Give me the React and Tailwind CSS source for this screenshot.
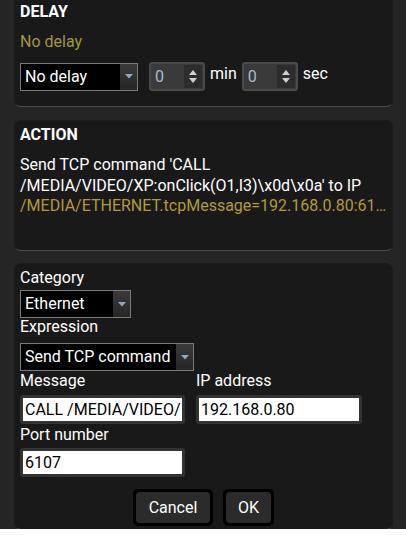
import React from "react";

const Arrow = () => (
  <svg width="8" height="5" viewBox="0 0 8 5">
    <path d="M0 0 L8 0 L4 4.5 Z" fill="#8fa6c6" />
  </svg>
);

const Select = ({ value, width }) => (
  <div
    className={`flex h-[28px] border border-[#7a7a7a] bg-black ${width}`}
  >
    <div className="flex-1 pl-[4px] text-[16px] leading-[26px] text-white truncate">{value}</div>
    <div className="flex w-[17px] items-center justify-center bg-gradient-to-b from-[#3a3a3a] to-[#262626]">
      <Arrow />
    </div>
  </div>
);

const Spinner = () => (
  <div className="flex h-[29px] w-[56px] rounded-[3px] border-2 border-[#4a4a4a] bg-[#3a3a3a]">
    <div className="flex-1 pl-[4px] text-[16px] leading-[25px] text-[#a7bccf]">0</div>
    <div className="flex w-[18px] flex-col items-center justify-center gap-[3px] bg-[#2c2c2c] my-[1px] mr-[1px]">
      <svg width="8" height="5" viewBox="0 0 8 5">
        <path d="M0 5 L8 5 L4 0 Z" fill="#cfcfcf" />
      </svg>
      <svg width="8" height="5" viewBox="0 0 8 5">
        <path d="M0 0 L8 0 L4 5 Z" fill="#cfcfcf" />
      </svg>
    </div>
  </div>
);

const TextInput = ({ value, width }) => (
  <div className={`h-[29px] rounded-[3px] bg-[#333] p-[3px] ${width}`}>
    <div className="h-full bg-white pl-[2px] text-[16px] leading-[23px] text-black overflow-hidden whitespace-nowrap">
      {value}
    </div>
  </div>
);

const Label = ({ children, className = "" }) => (
  <div className={`h-[20px] text-[16px] leading-[20px] text-white ${className}`}>{children}</div>
);

const panel =
  "rounded-[7px] border border-[#1c1c1c] border-b-[#4d4d4d] bg-[#191919] px-[5px]";

export default function App() {
  return (
    <div
      className="h-[537px] w-[406px] bg-[#252525] pl-[14px] pr-[13px]"
      style={{ fontFamily: "Roboto, 'Liberation Sans', sans-serif" }}
    >
      <div className={`${panel} -mt-[8px] h-[115px] pt-[10px]`}>
        <div className="h-[18px] text-[16px] font-bold leading-[18px] text-white">DELAY</div>
        <div className="mt-[11px] h-[20px] text-[16px] leading-[20px] text-[#a19738]">No delay</div>
        <div className="mt-[10px] flex items-center">
          <Select value="No delay" width="w-[118px]" />
          <div className="ml-[11px]">
            <Spinner />
          </div>
          <div className="ml-[5px] mr-[5px] -mt-[6px] text-[16px] leading-[20px] text-white">min</div>
          <Spinner />
          <div className="ml-[5px] -mt-[6px] text-[16px] leading-[20px] text-white">sec</div>
        </div>
      </div>

      <div className={`${panel} mt-[13px] h-[131px] pt-[3px]`}>
        <div className="h-[18px] text-[16px] font-bold leading-[18px] text-white mt-[2px]">ACTION</div>
        <div className="mt-[11px] text-[16px] leading-[20.5px] text-white">
          <div>Send TCP command 'CALL</div>
          <div className="whitespace-nowrap">/MEDIA/VIDEO/XP:onClick(O1,I3)\x0d\x0a' to IP</div>
          <div className="truncate text-[#b09c31]">
            /MEDIA/ETHERNET.tcpMessage=192.168.0.80:6107
          </div>
        </div>
      </div>

      <div className={`${panel} mt-[12px] h-[267px] pt-[4px]`}>
        <Label>Category</Label>
        <div className="mt-[2px]">
          <Select value="Ethernet" width="w-[111px]" />
        </div>
        <Label className="mt-[-1px]">Expression</Label>
        <div className="mt-[6px]">
          <Select value="Send TCP command" width="w-[174px]" />
        </div>
        <div className="flex">
          <div className="w-[176px]">
            <Label>Message</Label>
            <div className="mt-[4px]">
              <TextInput value="CALL /MEDIA/VIDEO/" width="w-[165px]" />
            </div>
          </div>
          <div>
            <Label>IP address</Label>
            <div className="mt-[4px]">
              <TextInput value="192.168.0.80" width="w-[166px]" />
            </div>
          </div>
        </div>
        <Label className="mt-[1px]">Port number</Label>
        <div className="mt-[3px]">
          <TextInput value="6107" width="w-[165px]" />
        </div>
        <div className="mt-[12px] flex justify-center gap-[10px]">
          <button className="h-[37px] w-[80px] rounded-[5px] bg-black p-[3px]">
            <div className="h-full rounded-[4px] bg-[#2b2b2b] text-[16px] leading-[31px] text-white">Cancel</div>
          </button>
          <button className="h-[37px] w-[51px] rounded-[5px] bg-black p-[3px]">
            <div className="h-full rounded-[4px] bg-[#2b2b2b] text-[16px] leading-[31px] text-white">OK</div>
          </button>
        </div>
      </div>
    </div>
  );
}
